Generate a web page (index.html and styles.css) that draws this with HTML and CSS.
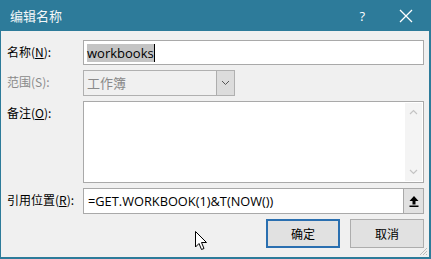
FILE: index.html
```html
<!DOCTYPE html>
<html lang="zh-CN">
<head>
    <meta charset="UTF-8">
    <title>编辑名称</title>
    <link rel="stylesheet" href="styles.css">
</head>
<body>
    <div class="dialog">
        <div class="title-bar">
            <span class="title">编辑名称</span>
            <span class="help">?</span>
            <span class="close">
                <svg width="14" height="14" viewBox="0 0 14 14"><path d="M1 1L13 13M13 1L1 13" stroke="#fff" stroke-width="1.3"/></svg>
            </span>
        </div>
        <div class="content">
            <div class="form-grid">
                <label class="label">名称(<u>N</u>):</label>
                <div class="field name-field"><span class="selected">workbooks</span><span class="caret"></span></div>

                <label class="label disabled">范围(S):</label>
                <div class="select">
                    <span class="select-text">工作簿</span>
                    <span class="select-btn">
                        <svg width="9" height="6" viewBox="0 0 9 6"><path d="M1 1L4.5 4.5L8 1" fill="none" stroke="#555" stroke-width="1"/></svg>
                    </span>
                </div>

                <label class="label">备注(<u>O</u>):</label>
                <div class="field memo">
                    <div class="memo-text"></div>
                    <div class="scrollbar">
                        <svg width="9" height="6" viewBox="0 0 9 6"><path d="M1 5L4.5 1.5L8 5" fill="none" stroke="#c4c4c4" stroke-width="1.2"/></svg>
                        <svg width="9" height="6" viewBox="0 0 9 6"><path d="M1 1L4.5 4.5L8 1" fill="none" stroke="#c4c4c4" stroke-width="1.2"/></svg>
                    </div>
                </div>

                <label class="label">引用位置(<u>R</u>):</label>
                <div class="ref-row">
                    <div class="field ref-field">=GET.WORKBOOK(1)&amp;T(NOW())</div>
                    <span class="ref-btn">
                        <svg width="10" height="11" viewBox="0 0 10 11"><path d="M5 0L9.5 5H6.5V8.5H3.5V5H0.5Z" fill="#000"/><rect x="0.5" y="9.5" width="9" height="1.5" fill="#000"/></svg>
                    </span>
                </div>
            </div>
            <div class="buttons">
                <button class="btn primary">确定</button>
                <button class="btn">取消</button>
            </div>
            <svg class="grip" width="9" height="9" viewBox="0 0 9 9"><path d="M8 1L1 8M8 4L4 8M8 7L7 8" stroke="#bbb" stroke-width="1"/></svg>
        </div>
    </div>
    <svg class="pointer" width="13" height="20" viewBox="0 0 13 20"><path d="M0.5 0.5V16L4 12.5L6.5 18.5L9 17.5L6.5 11.5H11.5Z" fill="#fff" stroke="#000" stroke-width="1" stroke-linejoin="round"/></svg>
</body>
</html>
```

FILE: styles.css
```css
html, body {
    margin: 0;
    width: 431px;
    height: 259px;
    overflow: hidden;
    font-family: "Noto Sans CJK SC", "Noto Sans", sans-serif;
    font-size: 12px;
}
body {
    position: relative;
    background-color: #2d7b9a;
}
.dialog {
    width: 428px;
    height: 257px;
    margin-left: 1px;
    display: flex;
    flex-direction: column;
}
.title-bar {
    height: 31px;
    display: flex;
    align-items: center;
    color: #fff;
    flex-shrink: 0;
}
.title {
    font-size: 13px;
    margin-left: 9px;
    flex: 1;
    opacity: 0.95;
}
.help {
    font-family: "Open Sans", sans-serif;
    font-size: 13px;
    margin-right: 34px;
}
.close {
    display: flex;
    margin-right: 16px;
}
.content {
    flex: 1;
    background-color: #f0f0f0;
    position: relative;
    padding: 9px 4px 0 6px;
}
.form-grid {
    display: grid;
    grid-template-columns: 76px 341px;
    grid-template-rows: 25px 26px 82px 26px;
    row-gap: 5px;
}
.label {
    line-height: 16px;
    padding-top: 4px;
    color: #000;
}
.label.disabled {
    color: #8a8a8a;
}
.field {
    background-color: #fff;
    border: 1px solid #a9a9a9;
    box-sizing: border-box;
}
.name-field {
    display: flex;
    align-items: center;
    padding-left: 3px;
    font-family: "Open Sans", sans-serif;
    font-size: 13px;
}
.selected {
    background-color: #c4c4c4;
    line-height: 18px;
}
.caret {
    width: 1px;
    height: 18px;
    background-color: #000;
}
.select {
    width: 152px;
    display: flex;
    border: 1px solid #b0b0b0;
    box-sizing: border-box;
    background-color: #f0f0f0;
}
.select-text {
    flex: 1;
    color: #8a8a8a;
    font-size: 13px;
    line-height: 24px;
    padding-left: 3px;
}
.select-btn {
    width: 17px;
    border-left: 1px solid #adadad;
    background-color: #dcdcdc;
    display: flex;
    align-items: center;
    justify-content: center;
}
.memo {
    display: flex;
}
.memo-text {
    flex: 1;
}
.scrollbar {
    width: 17px;
    margin: 1px 1px 1px 0;
    background-color: #f4f4f4;
    display: flex;
    flex-direction: column;
    justify-content: space-between;
    align-items: center;
    padding: 6px 0;
}
.ref-row {
    display: flex;
}
.ref-field {
    flex: 1;
    font-family: "Open Sans", sans-serif;
    font-size: 12.8px;
    line-height: 24px;
    padding-left: 4px;
    border-right: none;
}
.ref-btn {
    width: 21px;
    border: 1px solid #a9a9a9;
    background-color: #e1e1e1;
    display: flex;
    align-items: center;
    justify-content: center;
    box-sizing: border-box;
}
.buttons {
    display: flex;
    justify-content: flex-end;
    gap: 10px;
    margin-top: 5px;
    padding-right: 1px;
}
.btn {
    width: 74px;
    height: 29px;
    font-family: "Noto Sans CJK SC", sans-serif;
    font-size: 12px;
    background-color: #e1e1e1;
    border: 1px solid #adadad;
    padding: 0;
}
.btn.primary {
    border: 2px solid #2a6fb0;
}
.grip {
    position: absolute;
    right: 1px;
    bottom: 1px;
}
.pointer {
    position: absolute;
    left: 195px;
    top: 231px;
}
```
